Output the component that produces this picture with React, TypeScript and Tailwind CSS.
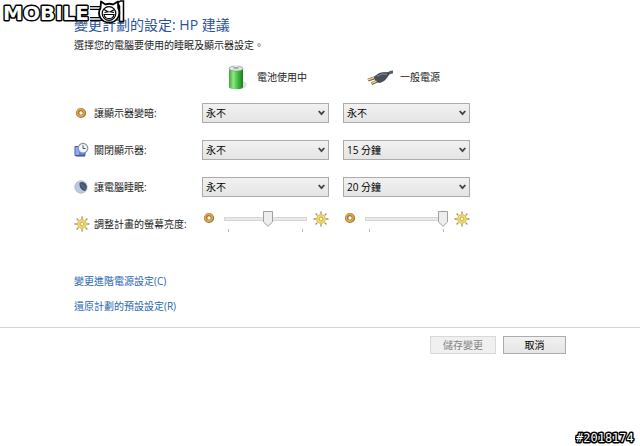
import { useId, useState } from 'react';
import type { ReactNode } from 'react';

function DimIcon() {
  return (
    <svg width="14" height="14" viewBox="0 0 14 14" aria-hidden="true">
      <circle cx="7" cy="7" r="3.4" fill="none" stroke="#a8722a" strokeWidth="3.4" />
      <circle cx="6.7" cy="6.6" r="3.5" fill="none" stroke="#dba951" strokeWidth="1.6" />
    </svg>
  );
}

function SunIcon() {
  return (
    <svg width="16" height="16" viewBox="0 0 16 16" aria-hidden="true">
      <path
        d="M8 1v1.500M8 13.500v1.500M1 8h1.500M13.500 8H15M3 3l1 1M12 12l1 1M3 13l1-1M12 4l1-1"
        stroke="#a99255"
        strokeWidth="1.4"
        strokeLinecap="round"
      />
      <circle cx="8" cy="8" r="4.4" fill="#f0dc6c" stroke="#d2b040" strokeWidth="0.8" />
      <circle cx="8" cy="8" r="1.9" fill="#fffbe0" stroke="#c8a540" strokeWidth="0.9" />
    </svg>
  );
}

function DisplayOffIcon() {
  return (
    <svg width="16" height="16" viewBox="0 0 16 16" aria-hidden="true">
      <path d="M1 4.500h10v9H1z" fill="#5f7fd4" stroke="#3c56a8" />
      <path d="M1.500 5H5v8H1.500z" fill="#93abec" />
      <path d="M2 14.500h9" stroke="#9aa3b8" />
      <circle cx="9" cy="6.200" r="4.800" fill="#f4f6fa" stroke="#8893a8" strokeWidth="1.200" />
      <path d="M9 3.200v3.300h2.600" fill="none" stroke="#4b566b" />
    </svg>
  );
}

function SleepIcon() {
  return (
    <svg width="16" height="16" viewBox="0 0 16 16" aria-hidden="true">
      <circle cx="7" cy="8" r="6.200" fill="#b9cbe2" stroke="#a7b4c6" strokeWidth="0.800" />
      <path d="M5.500 4c2.500-2 6-.5 7 2.500.8 2.400 0 4.500-1.300 5.500C7.800 11.500 5 8.500 5.500 4z" fill="#46536c" />
      <path d="M7 5l4.500 5.500" stroke="#7482a0" strokeWidth="0.900" />
    </svg>
  );
}

function BatteryIcon() {
  return (
    <svg width="26" height="28" viewBox="0 0 26 28" aria-hidden="true">
      <defs>
        <linearGradient id="cell" x1="0" x2="1">
          <stop offset="0" stopColor="#3aa53a" />
          <stop offset="0.3" stopColor="#92e887" />
          <stop offset="0.65" stopColor="#3fb83c" />
          <stop offset="1" stopColor="#1a7d20" />
        </linearGradient>
      </defs>
      <path d="M13 26c5 0 8-2 7.500-6L17 18z" fill="#dedede" />
      <path d="M3 5.500v18.500c0 3 14 3 14 0V5.500z" fill="url(#cell)" />
      <ellipse cx="10" cy="5.500" rx="7" ry="2.600" fill="#dce4de" stroke="#7f9f80" strokeWidth="0.700" />
      <path d="M7.500 3v2c0 1.200 5 1.200 5 0V3z" fill="#9da7a1" />
      <ellipse cx="10" cy="3" rx="2.500" ry="1" fill="#eef1ef" />
    </svg>
  );
}

function PlugIcon() {
  return (
    <svg width="28" height="18" viewBox="0 0 28 18" aria-hidden="true">
      <path d="M19 6.500c3-1 4-2.500 7-2.500" fill="none" stroke="#5a5e69" strokeWidth="3" />
      <path d="M7 9l5-3.500c3-1 7-1.500 10-.5-1 4-4 8-9 9.500L9 14z" fill="#4a4f5e" stroke="#2c2f39" strokeWidth="0.600" />
      <path d="M10 8.300l5-2.300 5 .2" fill="none" stroke="#8a90a6" />
      <path d="M1 12.200L7 10M4.500 15.700l5-2.200" stroke="#7a5f33" strokeWidth="3" />
      <path d="M1 11.800L7 9.600M4.500 15.300l5-2.200" stroke="#ecd5a2" strokeWidth="1.400" />
    </svg>
  );
}

function SiteLogo() {
  return (
    <svg className="absolute left-0 top-0" width="130" height="26" viewBox="0 0 130 26" role="img" aria-label="MOBILE01">
      <text
        x="3"
        y="20"
        fontSize="20"
        fill="#fff"
        stroke="#000"
        strokeWidth="3"
        strokeLinejoin="round"
        paintOrder="stroke"
        className="font-['DejaVu_Sans',sans-serif] font-bold"
      >
        MOBILE
      </text>
      <path d="M90 8h12M90 19h12" stroke="#000" strokeWidth="4" />
      <path d="M89 8h14M89 19h14" stroke="#fff" strokeWidth="1.600" />
      <path d="M117.500 3l3-2h3v20.500h-4V6z" fill="#fff" stroke="#000" strokeWidth="1.500" />
      <path
        d="M101 1.500l4.500 3c2.500-1 5-1 7.500 0l5-3 .2 6.500c3.300 7-1.200 14.500-9 14.500S96.500 15 100.500 8z"
        fill="#fff"
        stroke="#000"
        strokeWidth="1.800"
        strokeLinejoin="round"
      />
      <circle cx="109" cy="13.500" r="6.800" fill="#fff" stroke="#000" strokeWidth="1.200" />
      <path d="M104 9.500l4 2.300-3.500.7M114.500 9.500l-4 2.300 3.500.7" fill="none" stroke="#000" strokeWidth="1.200" />
      <path d="M104 14.500h10c-.8 5.500-9 5.500-10 0z" fill="#fff" stroke="#000" strokeWidth="1.200" />
    </svg>
  );
}

function PostNumber() {
  return (
    <svg width="64" height="16" viewBox="0 0 64 16" role="img" aria-label="#2018174">
      <text
        x="1"
        y="12"
        fontSize="12"
        fill="#fff"
        stroke="#000"
        strokeWidth="3"
        strokeLinejoin="round"
        paintOrder="stroke"
        className="font-['DejaVu_Sans_Mono',monospace]"
      >
        #2018174
      </text>
    </svg>
  );
}

function PowerSelect({ label, value }: { label: string; value: string }) {
  return (
    <div className="relative">
      <select
        aria-label={label}
        defaultValue={value}
        className="block h-5 w-full appearance-none border border-[#acacac] bg-linear-to-b from-[#f1f1f1] to-[#e5e5e5] pl-[3px] text-[10px] leading-4 text-black"
      >
        <option>永不</option>
        <option>15 分鐘</option>
        <option>20 分鐘</option>
      </select>
      <svg className="pointer-events-none absolute right-1 top-1.5" width="7" height="8" viewBox="0 0 7 8" aria-hidden="true">
        <path d="M0.700 2l2.800 3.200L6.300 2" fill="none" stroke="#444" strokeWidth="1.800" />
      </svg>
    </div>
  );
}

function BrightnessSlider({ label, initial }: { label: string; initial: number }) {
  const [value, setValue] = useState(initial);

  return (
    <div className="flex items-start">
      <DimIcon />
      <div className="relative ml-2 mr-1.5 min-w-0 flex-1">
        <input
          type="range"
          aria-label={label}
          value={value}
          onChange={(e) => setValue(Number(e.target.value))}
          className="block h-4 w-full appearance-none bg-transparent [&::-webkit-slider-runnable-track]:h-1 [&::-webkit-slider-runnable-track]:border [&::-webkit-slider-runnable-track]:border-[#d6d6d6] [&::-webkit-slider-runnable-track]:bg-[#e7eaea] [&::-webkit-slider-thumb]:h-4 [&::-webkit-slider-thumb]:w-[9px] [&::-webkit-slider-thumb]:appearance-none [&::-webkit-slider-thumb]:opacity-0"
        />
        <svg
          className="pointer-events-none absolute top-0"
          style={{ left: `calc((100% - 10px) * ${value / 100})` }}
          width="10"
          height="16"
          viewBox="0 0 10 16"
          aria-hidden="true"
        >
          <path d="M.5.5h9V11L5 15.300.5 11z" fill="#ededed" stroke="#a0a0a0" />
        </svg>
        <div className="mt-0.5 flex justify-between px-1">
          <span className="h-[3px] w-px bg-[#b8b8b8]" />
          <span className="h-[3px] w-px bg-[#b8b8b8]" />
        </div>
      </div>
      <SunIcon />
    </div>
  );
}

function RowLabel({ icon, children }: { icon: ReactNode; children: string }) {
  return (
    <div className="flex items-center whitespace-nowrap">
      <span className="flex w-5 shrink-0">{icon}</span>
      <span>{children}</span>
    </div>
  );
}

const rows = [
  { icon: <DimIcon />, label: '讓顯示器變暗:', battery: '永不', plugged: '永不' },
  { icon: <DisplayOffIcon />, label: '關閉顯示器:', battery: '永不', plugged: '15 分鐘' },
  { icon: <SleepIcon />, label: '讓電腦睡眠:', battery: '永不', plugged: '20 分鐘' },
];

export default function App() {
  const titleId = useId();

  return (
    <div className="relative flex min-h-screen flex-col bg-white font-['Open_Sans','Noto_Sans_CJK_TC',sans-serif] text-[10px] leading-4 text-[#222]">
      <main className="pl-[74px] pr-[170px] pt-[15px]" aria-labelledby={titleId}>
        <h1 id={titleId} className="text-sm leading-5 text-[#2a5298]">變更計劃的設定: HP 建議</h1>
        <p className="leading-5">選擇您的電腦要使用的睡眠及顯示器設定。</p>

        <div className="mt-2 grid grid-cols-[114px_1fr_1fr] gap-x-3.5">
          <div className="col-start-2 flex items-center gap-[5px] pl-6">
            <BatteryIcon />
            <span>電池使用中</span>
          </div>
          <div className="flex items-center gap-[5px] pl-6">
            <PlugIcon />
            <span>一般電源</span>
          </div>
        </div>

        <div className="mt-3 flex flex-col gap-[17px]">
          {rows.map((row) => (
            <div key={row.label} className="grid grid-cols-[114px_1fr_1fr] gap-x-3.5">
              <RowLabel icon={row.icon}>{row.label}</RowLabel>
              <PowerSelect label={`${row.label} 電池使用中`} value={row.battery} />
              <PowerSelect label={`${row.label} 一般電源`} value={row.plugged} />
            </div>
          ))}
        </div>

        <div className="mt-3.5 grid h-[26px] grid-cols-[114px_1fr_1fr] gap-x-3.5">
          <RowLabel icon={<SunIcon />}>調整計畫的螢幕亮度:</RowLabel>
          <BrightnessSlider label="調整計畫的螢幕亮度: 電池使用中" initial={53} />
          <BrightnessSlider label="調整計畫的螢幕亮度: 一般電源" initial={100} />
        </div>

        <nav className="mt-9 flex flex-col items-start gap-[9px] text-[#1f66b0]">
          <a href="#advanced">變更進階電源設定(C)</a>
          <a href="#restore">還原計劃的預設設定(R)</a>
        </nav>
      </main>

      <footer className="mt-[13px] flex justify-end gap-[7px] border-t border-[#d5d5d5] pr-[74px] pt-2">
        <button type="button" disabled className="h-[18px] w-[66px] border border-[#d9d9d9] bg-[#f0f0f0] text-[#838383]">
          儲存變更
        </button>
        <button type="button" className="h-[18px] w-[63px] border border-[#acacac] bg-linear-to-b from-[#f1f1f1] to-[#e5e5e5] text-black">
          取消
        </button>
      </footer>

      <div className="mt-auto flex justify-end pr-px">
        <PostNumber />
      </div>
      <SiteLogo />
    </div>
  );
}
